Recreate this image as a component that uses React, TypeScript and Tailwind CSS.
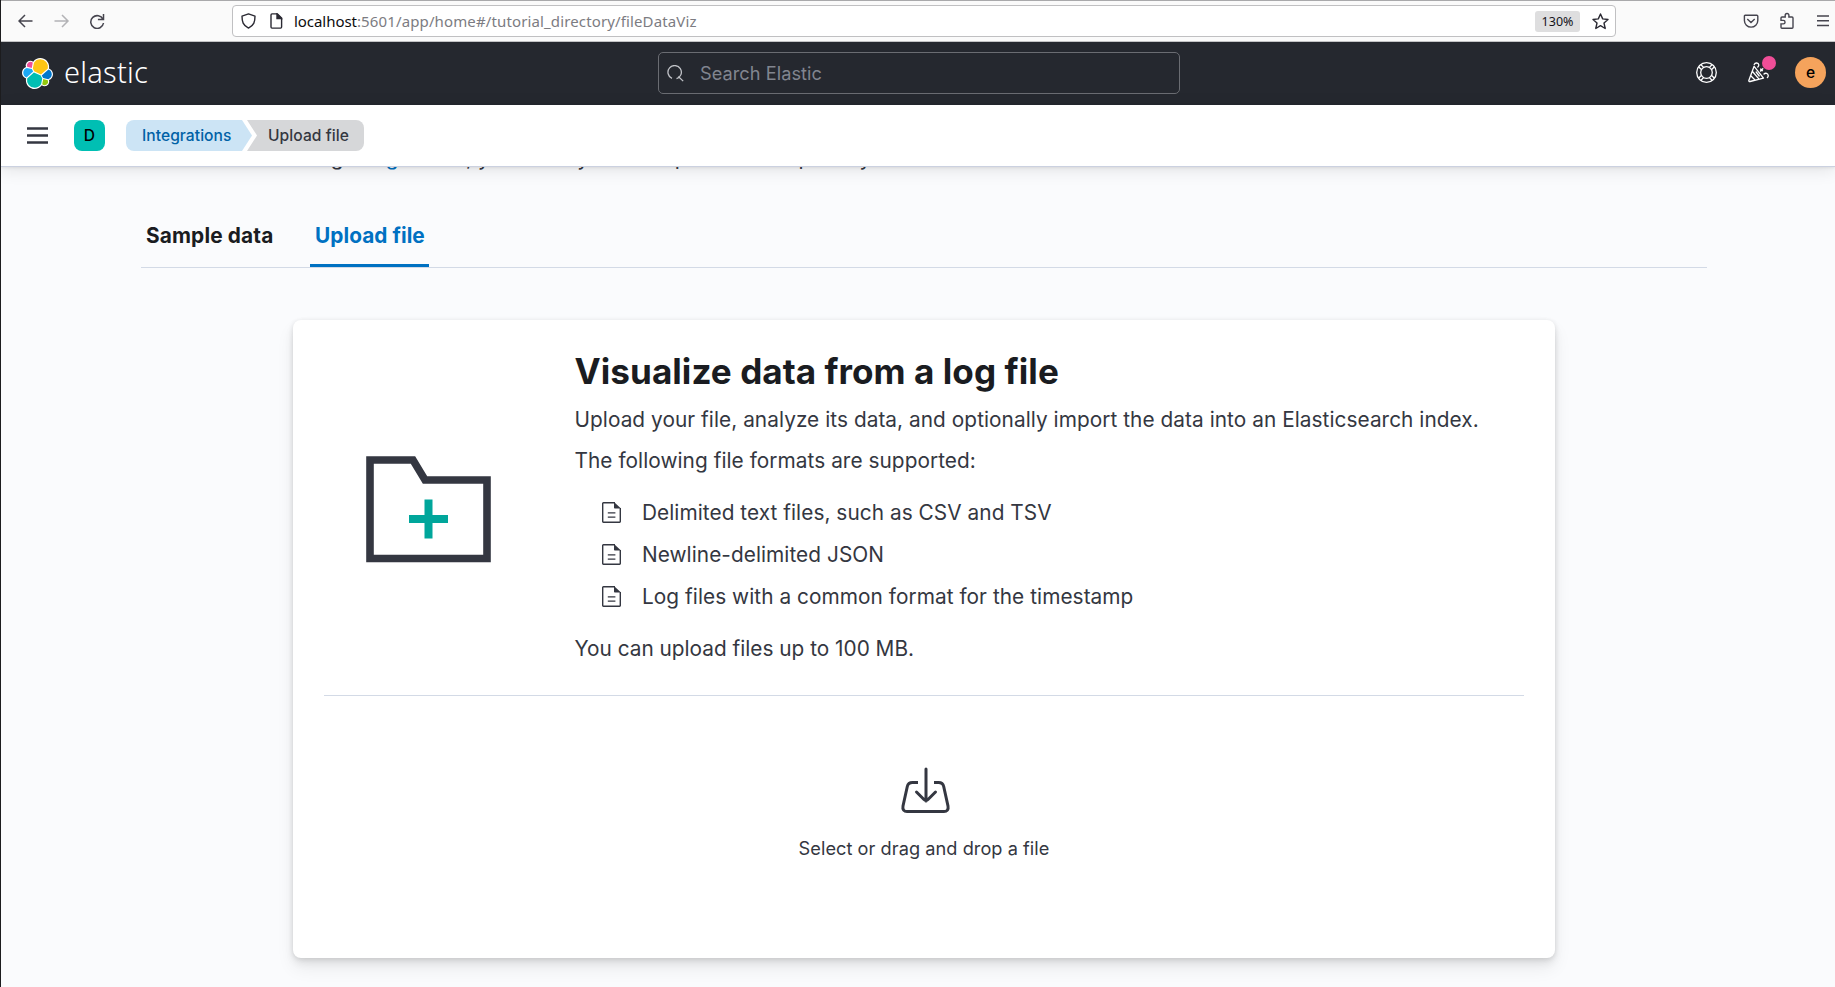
import React from "react";

const HexLogo = () => (
  <svg width="31" height="31" viewBox="0 0 32 32" className="block">
    <path fill="#fff" d="M32 16.77c0-2.68-1.66-5.03-4.17-5.95.11-.57.17-1.15.17-1.74C28 4.07 23.93 0 18.93 0c-2.92 0-5.64 1.39-7.35 3.75a4.78 4.78 0 0 0-2.95-1 4.84 4.84 0 0 0-4.54 6.5C1.6 10.14 0 12.54 0 15.2c0 2.69 1.67 5.05 4.18 5.96-.1.57-.16 1.15-.16 1.74C4.02 27.9 8.08 32 13.07 32c2.93 0 5.65-1.41 7.35-3.78.84.66 1.87 1.02 2.94 1.02a4.84 4.84 0 0 0 4.54-6.5c2.46-.9 4.1-3.3 4.1-5.97" />
    <path fill="#FEC514" d="m12.58 13.79 7.02 3.2 7.08-6.2A7.9 7.9 0 0 0 18.9 1.32a7.95 7.95 0 0 0-6.55 3.48l-1.18 6.11z" />
    <path fill="#00BFB3" d="M5.33 21.21a7.9 7.9 0 0 0 7.8 9.49c2.64 0 5.1-1.31 6.58-3.5l1.17-6.09-1.56-2.98-7.05-3.21z" />
    <path fill="#F04E98" d="m5.29 9.08 4.81 1.14 1.05-5.47a3.79 3.79 0 0 0-5.86 4.33" />
    <path fill="#1BA9F5" d="M4.87 10.23A5.3 5.3 0 0 0 1.33 15.2a5.27 5.27 0 0 0 3.38 4.9l6.75-6.1-1.24-2.65z" />
    <path fill="#93C90E" d="M20.87 27.2a3.79 3.79 0 0 0 5.86-4.3l-4.8-1.13z" />
    <path fill="#07C" d="m21.85 20.61 5.29 1.24a5.3 5.3 0 0 0 3.54-4.97 5.27 5.27 0 0 0-3.39-4.9l-6.92 6.06z" />
  </svg>
);

const DocIcon = () => (
  <svg width="19" height="21" viewBox="0 0 19 21" fill="none" className="block">
    <path d="M13 .7H1.4a.7.7 0 0 0-.7.7v18.2c0 .4.3.7.7.7h16.2a.7.7 0 0 0 .7-.7V6" stroke="#343741" strokeWidth="1.400" />
    <path d="M12 0 19 6.600h-6.200a.8.8 0 0 1-.8-.8z" fill="#343741" />
    <path d="M5.800 10.900h7.600M5.800 15.100h7.600" stroke="#343741" strokeWidth="1.400" />
  </svg>
);

const BrowserBar = () => (
  <div className="flex h-[42px] items-center border-t border-b border-t-[#a9a9ab] border-b-[#c3c3c5] bg-[#fafafa]">
    <div className="flex w-[231px] items-center pl-[17px]">
      <svg width="88" height="16" viewBox="0 0 88 16" fill="none" strokeWidth="1.5">
        <path d="M14.5 8H1M7 2 1 8l6 6" stroke="#45444e" />
        <path d="M36.5 8H50M44 2l6 6-6 6" stroke="#b3b3b6" />
        <path d="M85 6.400A6.400 6.400 0 1 0 85.500 10M85.500 1v5.600h-5.600" stroke="#45444e" />
      </svg>
    </div>
    <div className="flex h-8 w-[1384px] items-center rounded-[4px] border border-[#c0c0c2] bg-white pl-2">
      <svg width="42" height="16" viewBox="0 0 42 16" fill="none" stroke="#2b2a33" strokeWidth="1.4">
        <path d="M7.5.9 14 3.1c0 5.5-.9 9.3-6.5 12C1.9 12.400 1 8.600 1 3.100z" strokeLinejoin="round" />
        <path d="M31 .9h5.400l4.200 4.200v9a1 1 0 0 1-1 1H31a1 1 0 0 1-1-1V1.900a1 1 0 0 1 1-1z" />
        <path d="M36 1v4.600h4.500z" fill="#2b2a33" />
      </svg>
      <div className="mt-[2px] ml-[11px] font-['Noto_Sans','Open_Sans',sans-serif] text-[15px] whitespace-nowrap text-[#7c7c82]">
        <span className="tracking-[-0.050px] text-[#0c0c0d]">localhost</span>
        <span className="tracking-[0.130px]">:5601/app/home#/tutorial_directory/fileDataViz</span>
      </div>
      <div className="ml-auto flex h-[21px] w-[45px] items-center justify-center rounded-[3px] bg-[#dededf] pt-px font-['Noto_Sans',sans-serif] text-[12.5px] text-[#15141a]">130%</div>
      <svg width="17" height="17" viewBox="0 0 17 17" className="mr-[6px] ml-3" fill="none" stroke="#2b2a33" strokeWidth="1.4" strokeLinejoin="round">
        <path d="m8.500 1 2.200 4.900 5.300.6-4 3.500 1.200 5.500-4.700-2.800-4.700 2.800L5 10 1 6.500l5.300-.6z" />
      </svg>
    </div>
    <svg width="87" height="18" viewBox="0 0 87 18" className="ml-[127px]" fill="none" stroke="#45444e" strokeWidth="1.400">
      <path d="M2.200 3.200h11.600c.6 0 1 .4 1 1v4.200a6.700 6.700 0 0 1-13.400 0V4.200c0-.6.3-1 .8-1zM4.300 7 8 10.500 11.700 7" />
      <path d="M39 16.300h10a1 1 0 0 0 1-1V6a1 1 0 0 0-1-1h-3.100V3.300a1.800 1.800 0 0 0-3.700 0V5H39a1 1 0 0 0-1 1v2.400h2.300a1.700 1.700 0 0 1 0 3.500H38v3.400a1 1 0 0 0 1 1z" />
      <path d="M74 4h12M74 8.700h12M74 13.500h12" />
    </svg>
  </div>
);

const Header = () => (
  <div className="flex h-[63px] items-center bg-[#25282f] pb-px">
    <div className="flex w-[657px] items-center pl-[21px]">
      <HexLogo />
      <span className="-mt-[2px] ml-[11px] font-['Noto_Sans','Open_Sans',sans-serif] text-[29px] leading-8 font-light tracking-[0.250px] text-white">elastic</span>
    </div>
    <div className="flex h-[42px] w-[522px] items-center rounded-[5px] border border-[#6a6c72] pl-[8px]">
      <svg width="17" height="17" viewBox="0 0 17 17" fill="none" stroke="#c0c2c7" strokeWidth="1.300">
        <path d="M5 13.400A6.700 6.700 0 1 1 9.500 13.700M11.300 11.500l4.900 4.600" />
      </svg>
      <span className="mt-[2px] ml-4 text-[18.2px] tracking-[0.040px] text-[#81858f]">Search Elastic</span>
    </div>
    <div className="mb-px ml-auto flex items-center pr-[9px]">
      <svg width="21" height="21" viewBox="0 0 21 21" fill="none" stroke="#fff" strokeWidth="1.300">
        <circle cx="10.500" cy="10.500" r="9.800" />
        <circle cx="10.500" cy="10.500" r="5.800" />
        <path d="M15.400 13.200l2.800 2.800M13.200 15.400l2.800 2.800M5.600 13.200 2.800 16M7.800 15.400 5 18.200M5.600 7.800 2.800 5M7.800 5.600 5 2.800M15.400 7.800 18.200 5M13.200 5.600 16 2.800" />
      </svg>
      <div className="relative ml-[31px]">
        <svg width="21" height="21" viewBox="0 0 21 21" fill="none" stroke="#fff" strokeWidth="1.300" strokeLinecap="round" strokeLinejoin="round" className="block">
          <path d="M6.100 4.300.9 18.200c-.3.800.3 1.500 1.100 1.300l13.500-3.300zM4.500 9.500l6.500 7.700M2.600 13.500l4.600 4.700M8.200 10l3 4M6.200 2.500c.9-2.200 4.300-1.900 4.600.3.100 1-.3 1.700-1 2.300M12.500 9l2.300-2.300M12.800 7v1.700h1.700M16 12c1.500-1.500 4-.5 4.200 1.300.1 1-.2 1.700-.8 2.200" />
        </svg>
        <span className="absolute -top-[6px] left-[14px] h-[14px] w-[14px] rounded-full bg-[#f04e98]" />
      </div>
      <div className="ml-[26px] flex h-[31px] w-[31px] items-center justify-center rounded-full bg-[#f5a35c] text-[15.6px] font-medium text-black">e</div>
    </div>
  </div>
);

const Breadcrumbs = () => (
  <div className="relative z-10 flex h-[62px] items-center border-b border-[#cbd1e0] bg-white pl-[26px] shadow-[0_1px_3px_rgba(0,0,0,0.08),0_3px_16px_rgba(0,0,0,0.10)]">
    <svg width="21" height="17" viewBox="0 0 21 17" stroke="#343741" strokeWidth="2.500">
      <path d="M0 1.500h21M0 8.500h21M0 15.500h21" />
    </svg>
    <div className="ml-[26px] flex h-[31px] w-[31px] items-center justify-center rounded-[8px] bg-[#00bfb3] text-[15.6px] font-medium text-black">D</div>
    <div className="ml-[21px] flex text-[15.6px] leading-[31px] font-medium">
      <div className="h-[31px] w-[126px] rounded-l-[8px] bg-[#cce4f5] pl-4 tracking-[0.050px] whitespace-nowrap text-[#0061a6] [clip-path:polygon(0_0,116px_0,100%_50%,116px_100%,0_100%)]">Integrations</div>
      <div className="-ml-[5px] h-[31px] w-[117px] rounded-r-[8px] bg-[#d6d7d9] pl-[21px] whitespace-nowrap text-[#343741] [clip-path:polygon(0_0,100%_0,100%_100%,0_100%,10px_50%)]">Upload file</div>
    </div>
  </div>
);

const formats = [
  "Delimited text files, such as CSV and TSV",
  "Newline-delimited JSON",
  "Log files with a common format for the timestamp",
];

export default function App() {
  return (
    <div className="h-[987px] w-[1835px] overflow-hidden border-l border-[#1c1c1e] bg-[#fafbfd] font-['Inter',sans-serif] text-[20.8px] leading-[31.2px] tracking-[0.055px] text-[#343741]">
      <BrowserBar />
      <Header />
      <Breadcrumbs />
      <main className="flex flex-col">
        <p className="-mt-[25px] ml-[141px] h-[31px] whitespace-nowrap">
          In addition to adding <span className="text-[#0071c2]">integrations</span>, you can try our sample data or upload your own data.
        </p>
        <div className="mt-[31px] ml-[140px] flex h-[64px] w-[1566px] items-stretch border-b border-[#d3dae6] leading-[64px] font-bold tracking-[0.060px] text-[#1a1c21]">
          <div className="w-[137px] px-[5px] tracking-[0.150px] whitespace-nowrap">Sample data</div>
          <div className="-mb-px ml-[32px] h-[63px] w-[119px] border-b-[3px] border-[#0071c2] px-[5px] whitespace-nowrap text-[#0071c2]">Upload file</div>
        </div>
        <section className="mt-[52px] ml-[292px] flex h-[638px] w-[1262px] flex-col rounded-[8px] bg-white px-[31px] pt-[31px] shadow-[0_1px_5px_rgba(0,0,0,0.10),0_5px_9px_rgba(0,0,0,0.07),0_10px_18px_rgba(0,0,0,0.07)]">
          <div className="flex h-[345px] border-b border-[#d3dae6]">
            <div className="w-[250.500px] pt-[105px] pl-[42px]">
              <svg width="125" height="107" viewBox="0 0 125 107" fill="none">
                <path d="M4 4h43l12 20h62v78.500H4z" stroke="#343741" strokeWidth="7.600" />
                <path d="M43 63h39M62.500 43.500v39" stroke="#00a69b" strokeWidth="8" />
              </svg>
            </div>
            <div>
              <h1 className="text-[35.100px] leading-[41.600px] font-bold tracking-[0.050px] text-[#1a1c21]">Visualize data from a log file</h1>
              <p className="mt-[11px] whitespace-nowrap">Upload your file, analyze its data, and optionally import the data into an Elasticsearch index.</p>
              <p className="mt-[10px]">The following file formats are supported:</p>
              <ul className="mt-[21.400px] flex flex-col gap-[10.400px]">
                {formats.map((t) => (
                  <li key={t} className="flex h-[31.200px] items-center pl-[27.500px]">
                    <DocIcon />
                    <span className="ml-[21px]">{t}</span>
                  </li>
                ))}
              </ul>
              <p className="mt-[21px] tracking-[0px]">You can upload files up to 100 MB.</p>
            </div>
          </div>
          <div className="flex flex-col items-center pt-[71px]">
            <svg width="51" height="47" viewBox="0 0 51 47" fill="none" stroke="#343741" strokeWidth="3" className="ml-[2px]">
              <path d="M18 15.500h-5.500c-2.800 0-4.700 1.500-5.200 4L3 39c-.7 3.500 1 5.500 4 5.500h37c3 0 4.700-2 4-5.500l-4.300-19.500c-.5-2.500-2.400-4-5.200-4H34" />
              <path d="M26 2v32M16.500 25l7.500 7.500a2.800 2.800 0 0 0 4 0L35.500 25" strokeLinecap="round" />
            </svg>
            <div className="mt-[19px] text-[18.200px] leading-[31px] tracking-[0.040px]">Select or drag and drop a file</div>
          </div>
        </section>
      </main>
    </div>
  );
}
